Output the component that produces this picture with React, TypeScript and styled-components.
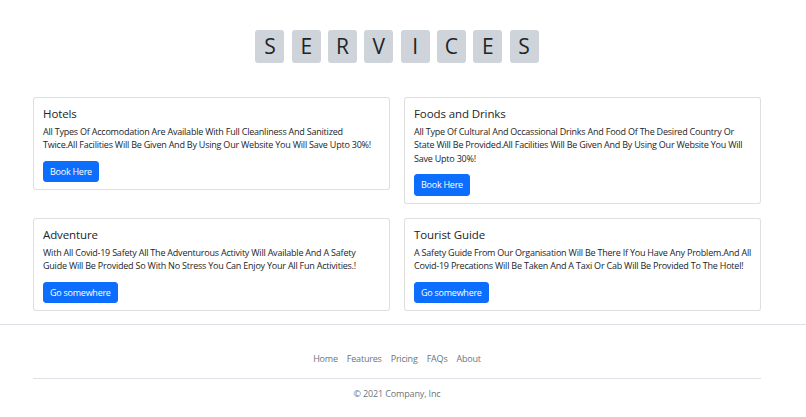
import React from "react";
import styled, { createGlobalStyle } from "styled-components";

const Global = createGlobalStyle`
  html, body { margin: 0; padding: 0; background: #fff; }
  body {
    font-family: "Open Sans", "Noto Sans", "Liberation Sans", sans-serif;
    font-size: 9px;
    line-height: 1.5;
    color: #212529;
  }
  * { box-sizing: border-box; }
`;

const Page = styled.div`
  display: flex;
  flex-direction: column;
`;

const Centered = styled.div`
  margin-right: 12px;
`;

const Heading = styled.h1`
  display: flex;
  justify-content: center;
  gap: 7.3px;
  margin: 30px 0 34px;
  padding: 0;
  font-weight: 400;
`;

const Letter = styled.span`
  width: 29px;
  height: 33px;
  display: flex;
  align-items: center;
  justify-content: center;
  background: #ced4da;
  border-radius: 3px;
  font-size: 21px;
  line-height: 1;
  color: #212529;
`;

const Container = styled.div`
  width: 728px;
  margin: 0 auto;
`;

const Grid = styled.div`
  display: grid;
  grid-template-columns: 1fr 1fr;
  column-gap: 14px;
  row-gap: 14px;
  align-items: start;
  margin-bottom: 13px;
`;

const Card = styled.div`
  border: 1px solid rgba(0, 0, 0, 0.125);
  border-radius: 3px;
  padding: 9px 9px 7px;
  background: #fff;
`;

const Title = styled.h5`
  margin: 0 0 4px;
  font-size: 11.5px;
  font-weight: 500;
  line-height: 1.2;
  letter-spacing: -0.1px;
`;

const Text = styled.p`
  margin: 0 0 9px;
  font-size: 9px;
  line-height: 1.5;
  letter-spacing: -0.22px;
  white-space: pre;
  color: #212529;
`;

const Button = styled.a`
  display: inline-block;
  background: #0d6efd;
  color: #fff;
  border: 1px solid #0d6efd;
  border-radius: 3px;
  padding: 3px 6px;
  font-size: 9px;
  line-height: 1.5;
  letter-spacing: -0.25px;
  text-decoration: none;
`;

const FooterWrap = styled.div`
  border-top: 1px solid #dee2e6;
`;

const Footer = styled.footer`
  padding: 9px 0;
  margin: 13.5px auto;
  width: 728px;
`;

const Nav = styled.ul`
  display: flex;
  justify-content: center;
  list-style: none;
  margin: 0 0 8px;
  padding: 0 0 8px;
  border-bottom: 1px solid #dee2e6;
`;

const NavLink = styled.a`
  display: block;
  padding: 4.5px 4.5px;
  color: #6c757d;
  text-decoration: none;
  font-size: 9px;
  line-height: 1.5;
  letter-spacing: -0.2px;
`;

const Copy = styled.p`
  margin: 0;
  text-align: center;
  color: #6c757d;
  font-size: 9px;
  line-height: 1.5;
  letter-spacing: -0.15px;
`;

const cards = [
  {
    title: "Hotels",
    text: "All Types Of Accomodation Are Available With Full Cleanliness And Sanitized\nTwice.All Facilities Will Be Given And By Using Our Website You Will Save Upto 30%!",
    button: "Book Here",
  },
  {
    title: "Foods and Drinks",
    text: "All Type Of Cultural And Occassional Drinks And Food Of The Desired Country Or\nState Will Be Provided.All Facilities Will Be Given And By Using Our Website You Will\nSave Upto 30%!",
    button: "Book Here",
  },
  {
    title: "Adventure",
    text: "With All Covid-19 Safety All The Adventurous Activity Will Available And A Safety\nGuide Will Be Provided So With No Stress You Can Enjoy Your All Fun Activities.!",
    button: "Go somewhere",
  },
  {
    title: "Tourist Guide",
    text: "A Safety Guide From Our Organisation Will Be There If You Have Any Problem.And All\nCovid-19 Precations Will Be Taken And A Taxi Or Cab Will Be Provided To The Hotel!",
    button: "Go somewhere",
  },
];

export default function App() {
  return (
    <Page>
      <Global />
      <Centered>
        <Heading>
          {"SERVICES".split("").map((c, i) => (
            <Letter key={i}>{c}</Letter>
          ))}
        </Heading>
        <Container>
          <Grid>
            {cards.map((c) => (
              <Card key={c.title}>
                <Title>{c.title}</Title>
                <Text>{c.text}</Text>
                <Button href="#">{c.button}</Button>
              </Card>
            ))}
          </Grid>
        </Container>
      </Centered>
      <FooterWrap>
        <Centered>
          <Footer>
            <Nav>
              {["Home", "Features", "Pricing", "FAQs", "About"].map((l) => (
                <li key={l}>
                  <NavLink href="#">{l}</NavLink>
                </li>
              ))}
            </Nav>
            <Copy>© 2021 Company, Inc</Copy>
          </Footer>
        </Centered>
      </FooterWrap>
    </Page>
  );
}
